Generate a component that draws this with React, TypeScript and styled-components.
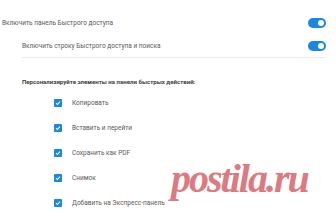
import styled, { createGlobalStyle } from "styled-components";

const GlobalStyle = createGlobalStyle`
  html, body {
    margin: 0;
    padding: 0;
    background: #ffffff;
  }
  body {
    font-family: Roboto, "Noto Sans", sans-serif;
    -webkit-font-smoothing: antialiased;
  }
`;

const Page = styled.div`
  position: relative;
  width: 336px;
  height: 213px;
  overflow: hidden;
  padding: 11px 10px 0 2px;
  box-sizing: border-box;
`;

const ToggleRow = styled.div<{ indent?: boolean; divided?: boolean }>`
  display: flex;
  align-items: center;
  justify-content: space-between;
  height: 23px;
  margin-left: ${({ indent }) => (indent ? "20px" : "0")};
  border-bottom: ${({ divided }) => (divided ? "1px solid #ececec" : "none")};
`;

const Label = styled.span`
  font-size: 6.5px;
  color: #5a5a5a;
`;

const Switch = styled.div<{ on?: boolean }>`
  position: relative;
  width: 18px;
  height: 10px;
  border-radius: 5px;
  background: ${({ on }) => (on ? "#1a87e0" : "#c8c8c8")};

  &::after {
    content: "";
    position: absolute;
    top: 2px;
    right: ${({ on }) => (on ? "2px" : "10px")};
    width: 6px;
    height: 6px;
    border-radius: 50%;
    background: #ffffff;
  }
`;

const Heading = styled.div`
  margin: 14px 0 0 20px;
  height: 18px;
  display: flex;
  align-items: center;
  font-size: 6.1px;
  font-weight: 700;
  color: #404040;
`;

const CheckList = styled.ul`
  list-style: none;
  margin: 0 0 0 52px;
  padding: 0;
`;

const CheckItem = styled.li`
  display: flex;
  align-items: center;
  gap: 10px;
  height: 25px;
`;

const Box = styled.span`
  display: flex;
  align-items: center;
  justify-content: center;
  width: 8px;
  height: 8px;
  border-radius: 1px;
  background: #1a87e0;
`;

const Watermark = styled.div`
  position: absolute;
  left: 171px;
  top: 159px;
  font-family: "Liberation Serif", serif;
  font-weight: 700;
  font-style: italic;
  font-size: 40px;
  letter-spacing: -2px;
  line-height: 1;
  color: #d96c73;
  opacity: 0.9;
  pointer-events: none;
`;

const items = [
  "Копировать",
  "Вставить и перейти",
  "Сохранить как PDF",
  "Снимок",
  "Добавить на Экспресс-панель",
];

function Check() {
  return (
    <svg width="6" height="6" viewBox="0 0 6 6">
      <path d="M1 3.1 L2.4 4.5 L5 1.6" fill="none" stroke="#fff" strokeWidth="1.1" />
    </svg>
  );
}

export default function App() {
  return (
    <>
      <GlobalStyle />
      <Page>
        <ToggleRow>
          <Label>Включить панель Быстрого доступа</Label>
          <Switch on />
        </ToggleRow>
        <ToggleRow indent divided>
          <Label>Включить строку Быстрого доступа и поиска</Label>
          <Switch on />
        </ToggleRow>
        <Heading>Персонализируйте элементы на панели быстрых действий:</Heading>
        <CheckList>
          {items.map((item) => (
            <CheckItem key={item}>
              <Box>
                <Check />
              </Box>
              <Label>{item}</Label>
            </CheckItem>
          ))}
        </CheckList>
        <Watermark>postila.ru</Watermark>
      </Page>
    </>
  );
}
